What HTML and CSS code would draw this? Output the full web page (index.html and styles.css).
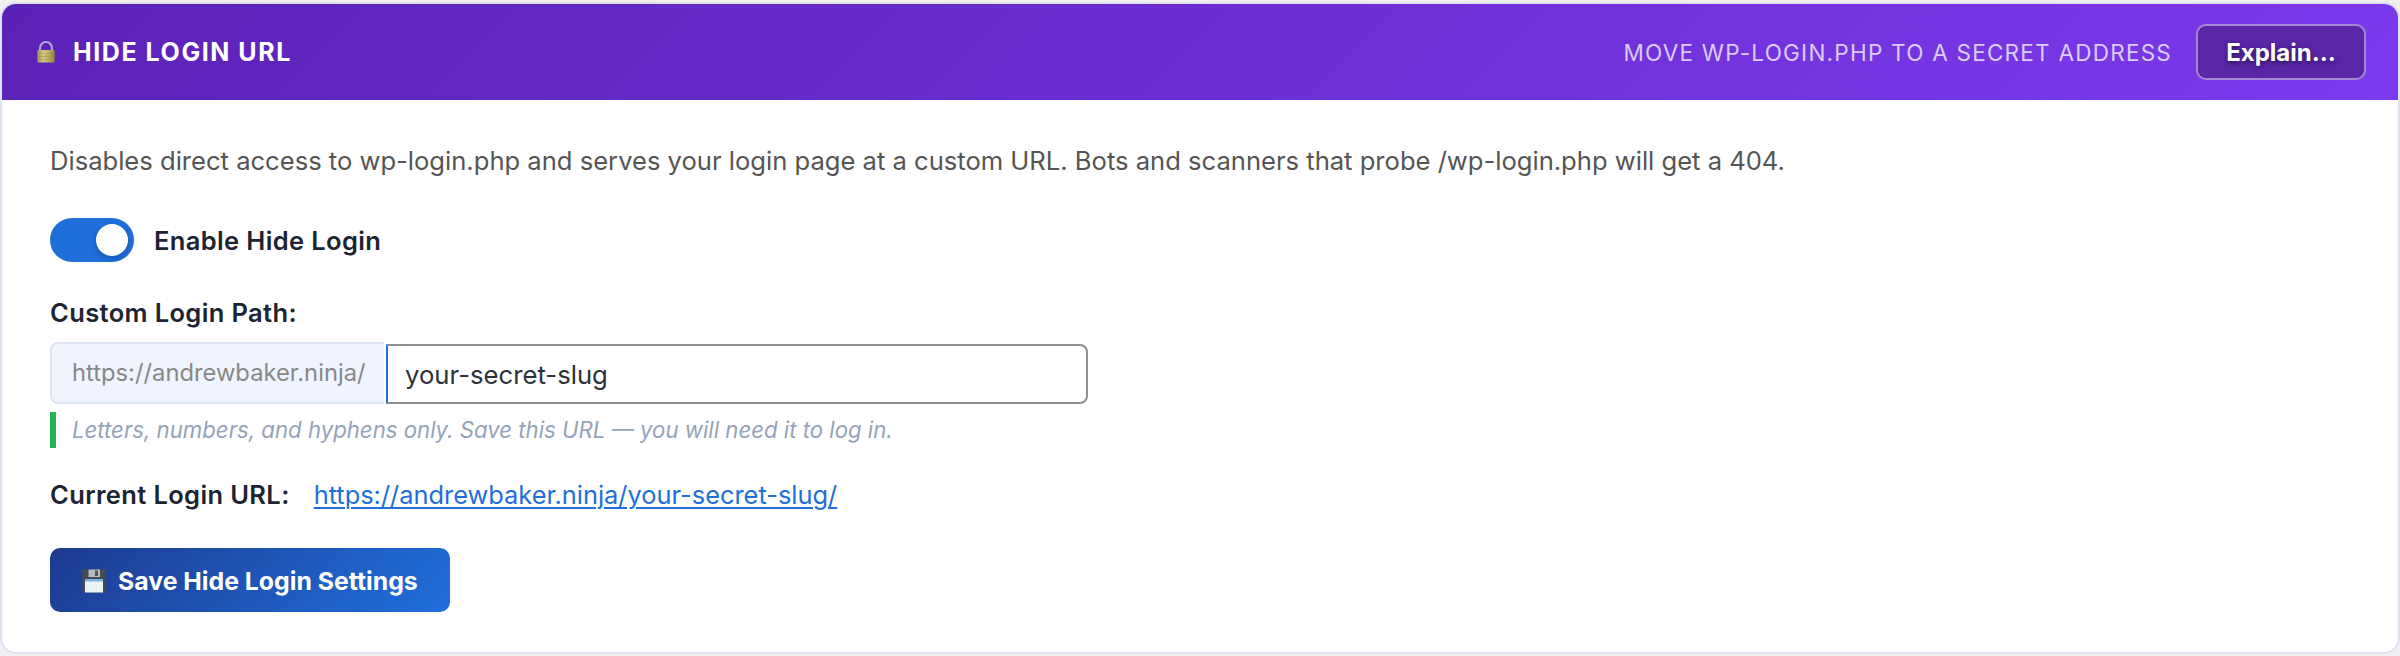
FILE: index.html
```html
<!DOCTYPE html>
<html lang="en">
<head>
<meta charset="utf-8">
<title>Hide Login URL</title>
<link rel="stylesheet" href="styles.css">
</head>
<body>
<section class="card">
  <header class="card-header">
    <svg class="lock" viewBox="0 0 18 22" width="18" height="22" aria-hidden="true">
      <defs><linearGradient id="brass" x1="0" x2="1"><stop offset="0" stop-color="#9f9350"/><stop offset=".35" stop-color="#d2c77c"/><stop offset=".65" stop-color="#b8ad61"/><stop offset="1" stop-color="#8f8440"/></linearGradient></defs>
      <path d="M3 10V7a6 6 0 0 1 12 0v3" fill="none" stroke="#a9a9d6" stroke-width="2.2"/>
      <rect x="0.3" y="9" width="17.4" height="12.4" rx="1" fill="url(#brass)"/>
      <path d="M.5 12.5h17M.5 15.5h17M.5 18.5h17" stroke="#8c8148" stroke-opacity=".35" stroke-width=".8"/>
    </svg>
    <h2 class="title">HIDE LOGIN URL</h2>
    <span class="subtitle">MOVE WP-LOGIN.PHP TO A SECRET ADDRESS</span>
    <button class="explain" type="button">Explain...</button>
  </header>
  <div class="card-body">
    <p class="description">Disables direct access to wp-login.php and serves your login page at a custom URL. Bots and scanners that probe /wp-login.php will get a 404.</p>
    <div class="toggle-row">
      <span class="toggle"><span class="knob"></span></span>
      <span class="toggle-label">Enable Hide Login</span>
    </div>
    <div class="field-label">Custom Login Path:</div>
    <div class="field">
      <span class="prefix"><span class="prefix-text">https://andrewbaker.ninja/</span></span>
      <div class="slug"><span class="slug-text">your-secret-slug</span></div>
    </div>
    <div class="hint"><span class="hint-text">Letters, numbers, and hyphens only. Save this URL — you will need it to log in.</span></div>
    <div class="current">
      <span class="current-label">Current Login URL:</span>
      <a class="current-link" href="#">https://andrewbaker.ninja/your-secret-slug/</a>
    </div>
    <button class="save" type="button">
      <svg class="floppy" viewBox="0 0 24 24" width="24" height="24" aria-hidden="true">
        <path d="M.5.5h23v23H2l-1.500-1.500z" fill="#4a4b50"/>
        <rect x="6.500" y=".5" width="11.500" height="7.500" fill="#b9bbc0"/>
        <rect x="13" y="1.500" width="3" height="5.500" fill="#54565c"/>
        <rect x="3" y="10" width="18" height="13.500" fill="#eef1f6"/>
        <rect x="3" y="10" width="18" height="2.500" fill="#79b4e6"/>
      </svg>
      <span class="save-text">Save Hide Login Settings</span>
    </button>
  </div>
</section>
</body>
</html>
```
FILE: styles.css
```css
* { box-sizing: border-box; }
body {
  margin: 0;
  padding-top: 2px;
  height: 656px;
  background: #f0f0f1;
  font-family: Inter, "Liberation Sans", sans-serif;
  font-size: 25.5px;
  color: #1d2433;
  white-space: nowrap;
}
.card {
  height: 652px;
  border: 2px solid #dde3f0;
  border-radius: 16px;
  background: #fff;
  overflow: hidden;
}
.card-header {
  display: flex;
  align-items: center;
  height: 98px;
  height: 96px;
  padding: 0 32px 0 35px;
  background: linear-gradient(135deg, #5b21b6, #7c3aed);
  color: #fff;
}
.lock { margin-right: 18px; }
.title { margin: 0; font-size: 25px; font-weight: 700; letter-spacing: 1.55px; }
.subtitle {
  margin-left: auto;
  font-size: 22.5px;
  letter-spacing: 1.24px;
  color: rgba(255, 255, 255, .75);
}
.explain {
  width: 170px;
  height: 56px;
  margin-left: 24px;
  padding: 0;
  border: 2px solid rgba(255, 255, 255, .45);
  border-radius: 10px;
  background: #5826a6;
  color: #fff;
  font: 700 24px Inter, sans-serif;
  text-shadow: 0 2px 4px rgba(0, 0, 0, .5);
}
.card-body { padding: 41px 48px 0; }
.description { margin: 0; font-size: 25.58px; line-height: 40px; color: #555; }
.toggle-row { display: flex; align-items: center; gap: 20px; margin-top: 37px; }
.toggle {
  display: flex;
  justify-content: flex-end;
  width: 84px;
  height: 44px;
  padding: 6px;
  border-radius: 22px;
  background: #1f6fdb;
}
.knob {
  width: 32px;
  height: 32px;
  border-radius: 50%;
  background: #fff;
  box-shadow: 0 2px 6px rgba(0, 0, 0, .25);
}
.toggle-label, .field-label, .current-label { font-weight: 600; letter-spacing: .37px; }
.toggle-label { padding-top: 1px; }
.field-label { margin-top: 35px; line-height: 32px; }
.field { display: flex; align-items: flex-end; gap: 2px; margin-top: 13px; }
.prefix {
  width: 334px;
  height: 62px;
  padding-left: 20px;
  border: 2px solid #dde3f0;
  border-right: 0;
  border-radius: 8px 0 0 8px;
  background: #f0f4ff;
  color: #888;
  font-size: 23.75px;
  line-height: 57px;
}
.slug {
  width: 702px;
  height: 60px;
  padding-left: 17px;
  border: 2px solid #8c8f94;
  border-left-color: #1f6fdb;
  border-radius: 0 8px 8px 0;
  color: #2c3338;
  font-size: 25.7px;
  line-height: 58px;
}
.hint {
  height: 36px;
  margin-top: 8px;
  padding-left: 16px;
  border-left: 6px solid #22b455;
  color: #94a3b8;
  font-size: 22.2px;
  font-style: italic;
  line-height: 36px;
}
.current { display: flex; gap: 24px; margin-top: 31px; line-height: 32px; }
.current-link { font-size: 25.4px; color: #1f6fdb; text-decoration-thickness: 2px; text-underline-offset: 3px; text-decoration-skip-ink: auto; }
.save {
  display: flex;
  align-items: center;
  width: 400px;
  height: 64px;
  margin-top: 37px;
  padding: 2px 0 0 32px;
  border: 0;
  border-radius: 10px;
  background: linear-gradient(135deg, #1e3a8f, #1f6fdb);
  color: #fff;
  font: 700 24.8px Inter, sans-serif;
}
.floppy { margin-right: 12px; }
```
